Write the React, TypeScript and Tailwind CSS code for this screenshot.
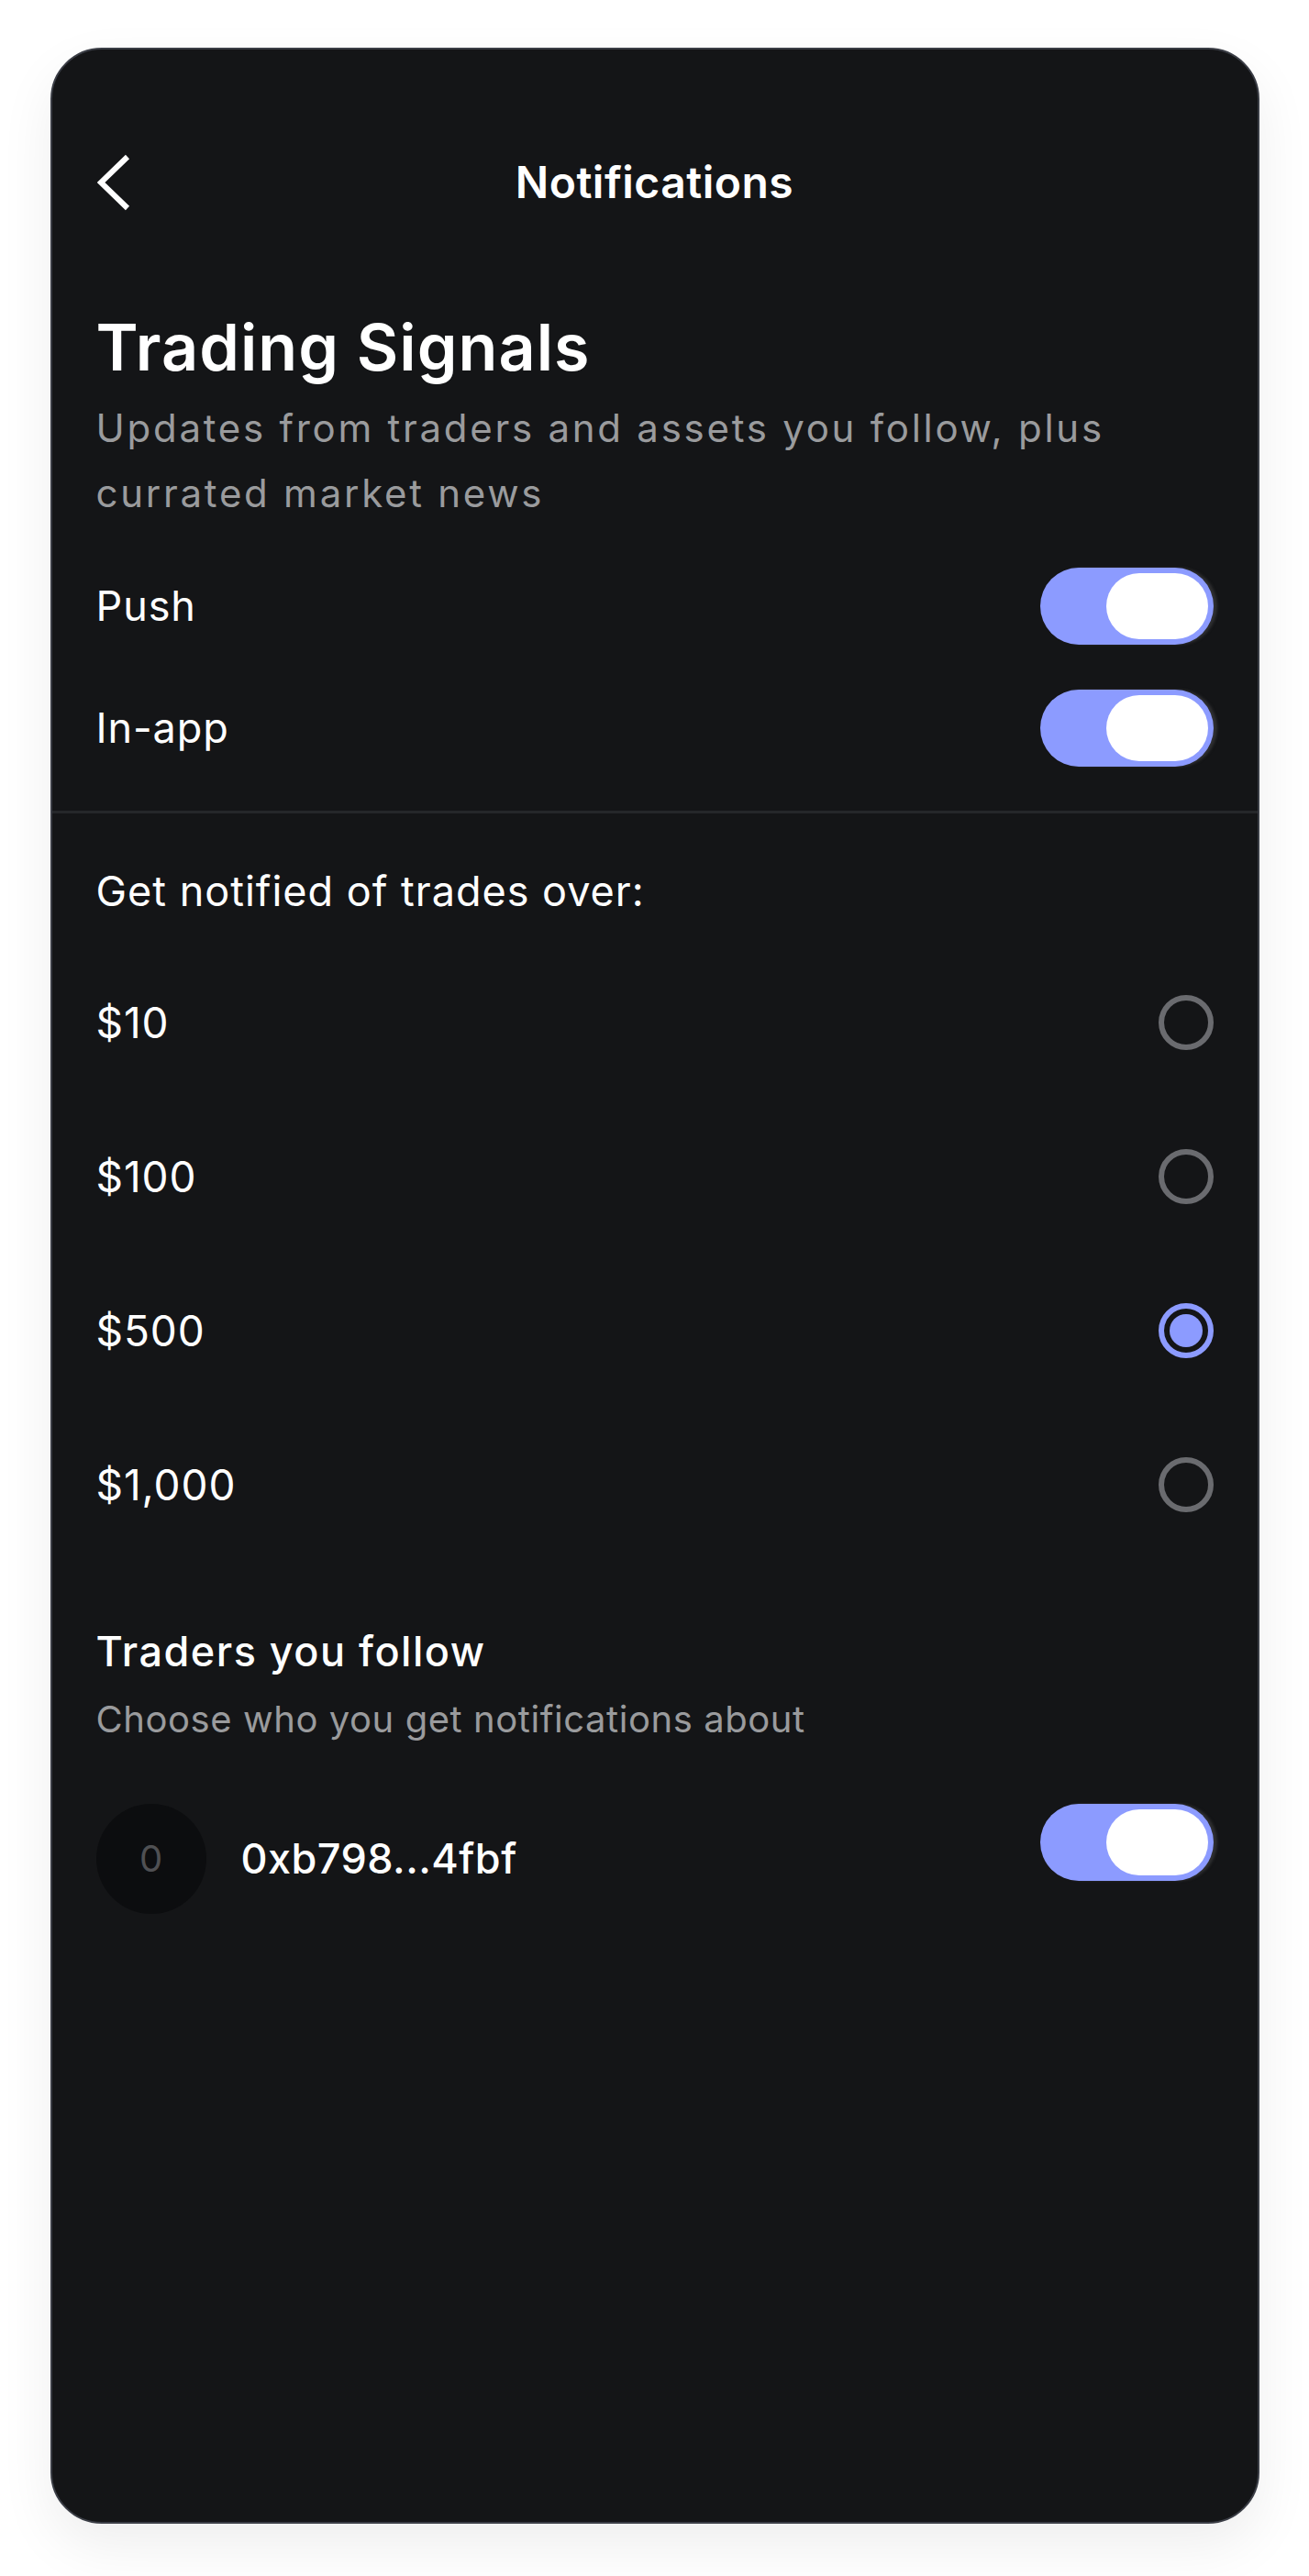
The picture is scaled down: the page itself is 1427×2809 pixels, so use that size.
import { useState } from 'react'

const THRESHOLDS = ['$10', '$100', '$500', '$1,000']

function Toggle({ on, onChange }: { on: boolean; onChange: () => void }) {
  return (
    <button
      onClick={onChange}
      className={`flex h-[84px] w-[189px] shrink-0 items-center rounded-full p-[6px] shadow-[4px_0_3px_rgba(58,58,60,0.7)] ${
        on ? 'justify-end bg-[#8c9bff]' : 'justify-start bg-[#3a3b40]'
      }`}
    >
      <span className="h-[72px] w-[111px] rounded-full bg-white" />
    </button>
  )
}

function Radio({ checked }: { checked: boolean }) {
  return checked ? (
    <span className="flex h-[60px] w-[60px] items-center justify-center rounded-full border-[6px] border-[#8c9bff]">
      <span className="h-[36px] w-[36px] rounded-full bg-[#8c9bff]" />
    </span>
  ) : (
    <span className="h-[60px] w-[60px] rounded-full border-[6px] border-[#6a6b6f]" />
  )
}

export default function App() {
  const [push, setPush] = useState(true)
  const [inApp, setInApp] = useState(true)
  const [threshold, setThreshold] = useState('$500')
  const [follow, setFollow] = useState(true)

  return (
    <div className="min-h-[2809px] bg-white pt-[52px] font-['Inter',sans-serif]">
      <div className="mx-auto h-[2700px] w-[1318px] overflow-hidden rounded-[56px] border-2 border-[#3a3d45] bg-[#141517] text-white shadow-[0_24px_60px_rgba(0,0,0,0.07)]">
        {/* Header */}
        <div className="mt-[95px] grid h-[100px] grid-cols-[1fr_auto_1fr] items-center px-[49px]">
          <button className="flex h-[64px] w-[40px] items-center">
            <svg width="36" height="62" viewBox="0 0 36 62" fill="none">
              <polyline points="33,3 4,31 33,59" stroke="white" strokeWidth="6" strokeLinejoin="miter" />
            </svg>
          </button>
          <h1 className="text-[48px] font-semibold leading-[60px] tracking-[0.01em]">Notifications</h1>
          <div />
        </div>

        <div className="px-[48px]">
          {/* Section title */}
          <h2 className="mt-[88px] text-[70px] font-semibold leading-[84px] tracking-[0.015em]">Trading Signals</h2>
          <p className="mt-[10px] text-[42px] leading-[71px] tracking-[0.065em] text-[#9a9b9d]">
            Updates from traders and assets you follow, plus currated market news
          </p>

          <div className="mt-[46px] flex h-[84px] items-center justify-between">
            <span className="text-[45px] leading-[60px] tracking-[0.02em]">Push</span>
            <Toggle on={push} onChange={() => setPush(!push)} />
          </div>
          <div className="mt-[49px] flex h-[84px] items-center justify-between">
            <span className="text-[45px] leading-[60px] tracking-[0.02em]">In-app</span>
            <Toggle on={inApp} onChange={() => setInApp(!inApp)} />
          </div>
        </div>

        <div className="mt-[48px] h-[3px] bg-[#25272a]" />

        <div className="px-[48px]">
          <p className="mt-[55px] text-[45px] leading-[60px] tracking-[0.022em]">Get notified of trades over:</p>

          <div className="mt-[29px]">
            {THRESHOLDS.map((t) => (
              <button
                key={t}
                onClick={() => setThreshold(t)}
                className="flex h-[168px] w-full items-center justify-between text-left"
              >
                <span className="text-[46px] leading-[60px] tracking-[0.02em]">{t}</span>
                <Radio checked={threshold === t} />
              </button>
            ))}
          </div>

          {/* Followed traders */}
          <h3 className="mt-[68px] text-[45px] font-medium leading-[60px] tracking-[0.033em]">Traders you follow</h3>
          <p className="mt-[16px] text-[40px] leading-[56px] tracking-[0.014em] text-[#9a9b9d]">
            Choose who you get notifications about
          </p>

          <div className="mt-[64px] flex items-start justify-between">
            <div className="flex items-center gap-[38px]">
              <div className="flex h-[120px] w-[120px] items-center justify-center rounded-full bg-[#0c0d0f] text-[40px] text-[#4f5053]">
                0
              </div>
              <span className="text-[45px] font-medium leading-[60px] tracking-[0.01em]">0xb798...4fbf</span>
            </div>
            <Toggle on={follow} onChange={() => setFollow(!follow)} />
          </div>
        </div>
      </div>
    </div>
  )
}
